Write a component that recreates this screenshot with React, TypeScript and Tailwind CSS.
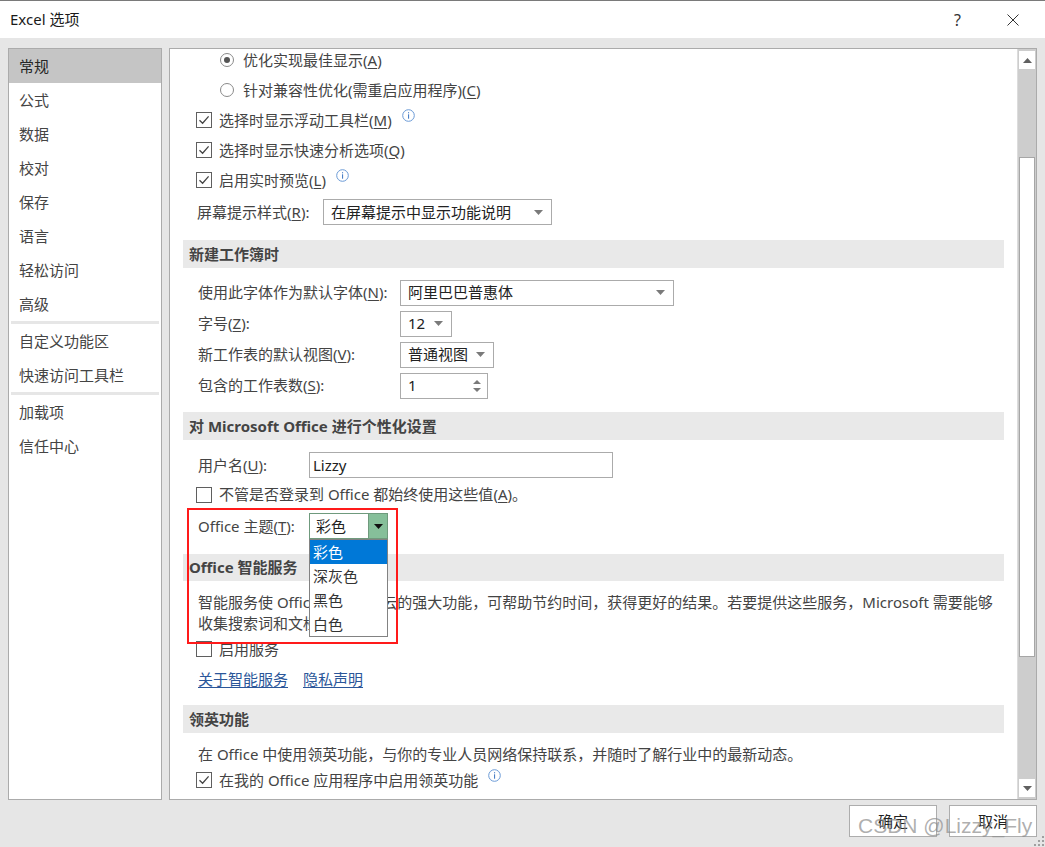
import React from "react";

const font = "font-['Noto_Sans','Noto_Sans_CJK_SC',sans-serif]";

function Key({ k }: { k: string }) {
  return (
    <>
      (<span className="underline underline-offset-2">{k}</span>)
    </>
  );
}

function Checkbox({ checked }: { checked?: boolean }) {
  return (
    <span className="w-[16px] h-[16px] shrink-0 border border-[#5f5f5f] bg-white flex items-center justify-center">
      {checked && (
        <svg width="12" height="12" viewBox="0 0 12 12" fill="none">
          <path d="M1.5 6.2 L4.6 9.2 L10.6 2.4" stroke="#444" strokeWidth="1.3" />
        </svg>
      )}
    </span>
  );
}

function Radio({ checked }: { checked?: boolean }) {
  return (
    <span className="w-[14px] h-[14px] shrink-0 rounded-full border border-[#8a8a8a] bg-white flex items-center justify-center">
      {checked && <span className="w-[6px] h-[6px] rounded-full bg-[#555]" />}
    </span>
  );
}

function Info() {
  return (
    <svg width="13" height="13" viewBox="0 0 13 13" className="self-start mt-[4px] ml-[3px]">
      <circle cx="6.5" cy="6.5" r="5.8" fill="white" stroke="#6a9ad6" strokeWidth="1" />
      <rect x="6" y="5.3" width="1.1" height="4.4" fill="#4a7fc6" />
      <rect x="6" y="3.2" width="1.1" height="1.1" fill="#4a7fc6" />
    </svg>
  );
}

function Caret() {
  return (
    <svg width="9" height="5" viewBox="0 0 9 5">
      <path d="M0 0 H9 L4.5 5 Z" fill="#7a7a7a" />
    </svg>
  );
}

function Select({ value, width }: { value: string; width: string }) {
  return (
    <div className={`${width} h-[26px] border border-[#ababab] bg-white flex items-center justify-between pl-[7px] pr-[8px]`}>
      <span className="text-[#222]">{value}</span>
      <Caret />
    </div>
  );
}

function Header({ children, h = "h-[28px]", mt }: { children: React.ReactNode; h?: string; mt: string }) {
  return (
    <div className={`${mt} ${h} mx-[13px] bg-[#e9e9e9] pl-[6px] flex items-center font-bold text-[#444]`}>
      {children}
    </div>
  );
}

const navTop = ["常规", "公式", "数据", "校对", "保存", "语言", "轻松访问", "高级"];

export default function App() {
  return (
    <div className={`${font} w-[1045px] h-[847px] bg-[#e6e6e6] flex flex-col text-[15px] text-[#444] relative overflow-hidden`}>
      {/* Title bar */}
      <div className="h-[38px] bg-white border-t border-[#7a7a7a] flex items-center px-[10px] shrink-0">
        <span className="text-[#1a1a1a] text-[15px]">Excel 选项</span>
        <span className="ml-auto mr-[46px] text-[#333] text-[16px]">?</span>
        <svg width="12" height="12" viewBox="0 0 12 12" className="mr-[16px]">
          <path d="M0.5 0.5 L11.5 11.5 M11.5 0.5 L0.5 11.5" stroke="#333" strokeWidth="1" />
        </svg>
      </div>

      {/* Body */}
      <div className="flex gap-[7px] px-[8px] pt-[10px]">
        {/* Left nav */}
        <div className="w-[154px] h-[752px] border border-[#ababab] bg-white flex flex-col shrink-0">
          {navTop.map((n, i) => (
            <div
              key={n}
              className={`h-[34px] pl-[10px] flex items-center ${i === 0 ? "bg-[#c5c5c5] text-[#262626]" : "text-[#444]"}`}
            >
              {n}
            </div>
          ))}
          <div className="h-[3px] mx-[2px] bg-[#e6e6e6]" />
          <div className="h-[34px] pl-[10px] flex items-center">自定义功能区</div>
          <div className="h-[34px] pl-[10px] flex items-center">快速访问工具栏</div>
          <div className="h-[3px] mx-[2px] bg-[#e6e6e6]" />
          <div className="h-[34px] pl-[10px] flex items-center">加载项</div>
          <div className="h-[34px] pl-[10px] flex items-center">信任中心</div>
        </div>

        {/* Content panel */}
        <div className="w-[869px] h-[752px] border border-[#ababab] bg-white flex">
          <div className="relative flex-1 overflow-hidden">
            <div className="-mt-[4px] flex flex-col">
              <div className="h-[30px] flex items-center pl-[50px] gap-[9px]">
                <Radio checked />
                <span>优化实现最佳显示<Key k="A" /></span>
              </div>
              <div className="h-[30px] flex items-center pl-[50px] gap-[9px]">
                <Radio />
                <span>针对兼容性优化(需重启应用程序)<Key k="C" /></span>
              </div>
              <div className="h-[30px] flex items-center pl-[26px] gap-[7px]">
                <Checkbox checked />
                <span>选择时显示浮动工具栏<Key k="M" /></span>
                <Info />
              </div>
              <div className="h-[30px] flex items-center pl-[26px] gap-[7px]">
                <Checkbox checked />
                <span>选择时显示快速分析选项<Key k="Q" /></span>
              </div>
              <div className="h-[30px] flex items-center pl-[26px] gap-[7px]">
                <Checkbox checked />
                <span>启用实时预览<Key k="L" /></span>
                <Info />
              </div>
              <div className="mt-[2px] h-[30px] flex items-center pl-[27px]">
                <span className="w-[126px]">屏幕提示样式<Key k="R" />:</span>
                <Select value="在屏幕提示中显示功能说明" width="w-[229px]" />
              </div>

              <Header mt="mt-[13px]">新建工作簿时</Header>

              <div className="mt-[9px] h-[31px] flex items-center pl-[28px]">
                <span className="w-[202px]">使用此字体作为默认字体<Key k="N" />:</span>
                <Select value="阿里巴巴普惠体" width="w-[274px]" />
              </div>
              <div className="h-[31px] flex items-center pl-[28px]">
                <span className="w-[202px]">字号<Key k="Z" />:</span>
                <Select value="12" width="w-[52px]" />
              </div>
              <div className="h-[31px] flex items-center pl-[28px]">
                <span className="w-[202px]">新工作表的默认视图<Key k="V" />:</span>
                <Select value="普通视图" width="w-[94px]" />
              </div>
              <div className="h-[31px] flex items-center pl-[28px]">
                <span className="w-[202px]">包含的工作表数<Key k="S" />:</span>
                <div className="w-[88px] h-[26px] border border-[#ababab] bg-white flex items-center justify-between pl-[7px] pr-[6px]">
                  <span className="text-[#222]">1</span>
                  <svg width="8" height="14" viewBox="0 0 8 14">
                    <path d="M0 5 H8 L4 1 Z" fill="#7a7a7a" />
                    <path d="M0 9 H8 L4 13 Z" fill="#7a7a7a" />
                  </svg>
                </div>
              </div>

              <Header mt="mt-[11px]">对 Microsoft Office 进行个性化设置</Header>

              <div className="mt-[10px] h-[30px] flex items-center pl-[28px]">
                <span className="w-[111px]">用户名<Key k="U" />:</span>
                <div className="w-[304px] h-[26px] border border-[#ababab] bg-white flex items-center pl-[3px] text-[#222]">
                  Lizzy
                </div>
              </div>
              <div className="h-[29px] flex items-center pl-[26px] gap-[7px]">
                <Checkbox />
                <span>不管是否登录到 Office 都始终使用这些值<Key k="A" />。</span>
              </div>
              <div className="mt-[2px] h-[30px] flex items-center pl-[28px]">
                <span className="w-[111px]">Office 主题<Key k="T" />:</span>
                <div className="w-[79px] h-[26px] border border-[#6f9a7d] bg-white flex">
                  <span className="flex-1 pl-[6px] flex items-center text-[#222]">彩色</span>
                  <span className="w-[19px] bg-[#86bf9a] border-l border-[#6f9a7d] flex items-center justify-center">
                    <svg width="9" height="5" viewBox="0 0 9 5">
                      <path d="M0 0 H9 L4.5 5 Z" fill="#111" />
                    </svg>
                  </span>
                </div>
              </div>

              <Header mt="mt-[13px]" h="h-[27px]">Office 智能服务</Header>

              <p className="mt-[11px] pl-[28px] leading-[21px] whitespace-nowrap">
                智能服务使 Office 应用具备云的强大功能，可帮助节约时间，获得更好的结果。若要提供这些服务，Microsoft 需要能够
                <br />
                收集搜索词和文档内容。
              </p>
              <div className="h-[30px] flex items-center pl-[26px] gap-[7px]">
                <Checkbox />
                <span>启用服务</span>
              </div>
              <div className="h-[30px] flex items-center pl-[28px] gap-[15px] text-[#2a5699]">
                <span className="underline underline-offset-2">关于智能服务</span>
                <span className="underline underline-offset-2">隐私声明</span>
              </div>

              <Header mt="mt-[11px]">领英功能</Header>

              <p className="mt-[10px] pl-[28px] h-[22px] leading-[22px]">
                在 Office 中使用领英功能，与你的专业人员网络保持联系，并随时了解行业中的最新动态。
              </p>
              <div className="h-[30px] flex items-center pl-[26px] gap-[7px]">
                <Checkbox checked />
                <span>在我的 Office 应用程序中启用领英功能</span>
                <Info />
              </div>
            </div>

            {/* Annotation frame */}
            <div className="absolute left-[17px] top-[459px] w-[211px] h-[136px] border-2 border-[#ff1a1a]" />

            {/* Open dropdown list */}
            <div className="absolute left-[139px] top-[490px] w-[79px] h-[98px] border border-[#828282] bg-white flex flex-col text-[#333]">
              <div className="h-[24px] bg-[#0078d7] text-white pl-[3px] flex items-center">彩色</div>
              <div className="h-[24px] pl-[3px] flex items-center">深灰色</div>
              <div className="h-[24px] pl-[3px] flex items-center">黑色</div>
              <div className="h-[24px] pl-[3px] flex items-center">白色</div>
            </div>
          </div>

          {/* Scrollbar */}
          <div className="w-[19px] bg-[#cdcdcd] border-l border-[#dcdcdc] flex flex-col py-[2px] px-[1px] shrink-0">
            <div className="h-[18px] bg-white flex items-center justify-center">
              <svg width="9" height="5" viewBox="0 0 9 5">
                <path d="M0 5 H9 L4.5 0 Z" fill="#606060" />
              </svg>
            </div>
            <div className="h-[88px]" />
            <div className="h-[500px] bg-white border border-[#a6a6a6]" />
            <div className="flex-1" />
            <div className="h-[18px] bg-white flex items-center justify-center">
              <svg width="9" height="5" viewBox="0 0 9 5">
                <path d="M0 0 H9 L4.5 5 Z" fill="#606060" />
              </svg>
            </div>
          </div>
        </div>
      </div>

      {/* Buttons */}
      <div className="flex justify-end gap-[12px] pr-[8px] mt-[5px]">
        <div className="w-[88px] h-[32px] bg-white border border-[#adadad] flex items-center justify-center text-[#222]">确定</div>
        <div className="w-[88px] h-[32px] bg-white border border-[#adadad] flex items-center justify-center text-[#222]">取消</div>
      </div>

      {/* Watermark */}
      <div className="absolute left-[858px] top-[812px] text-[21px] leading-[28px] text-[#8c8c8c]/70 font-['Liberation_Sans',sans-serif] pointer-events-none">
        CSDN @Lizzy_Fly
      </div>
      <svg width="11" height="11" viewBox="0 0 11 11" className="absolute right-[1px] bottom-[1px]">
        {[
          [9, 1], [9, 5], [5, 5], [9, 9], [5, 9], [1, 9],
        ].map(([x, y], i) => (
          <rect key={i} x={x} y={y} width="2" height="2" fill="#a0a0a0" />
        ))}
      </svg>
    </div>
  );
}
